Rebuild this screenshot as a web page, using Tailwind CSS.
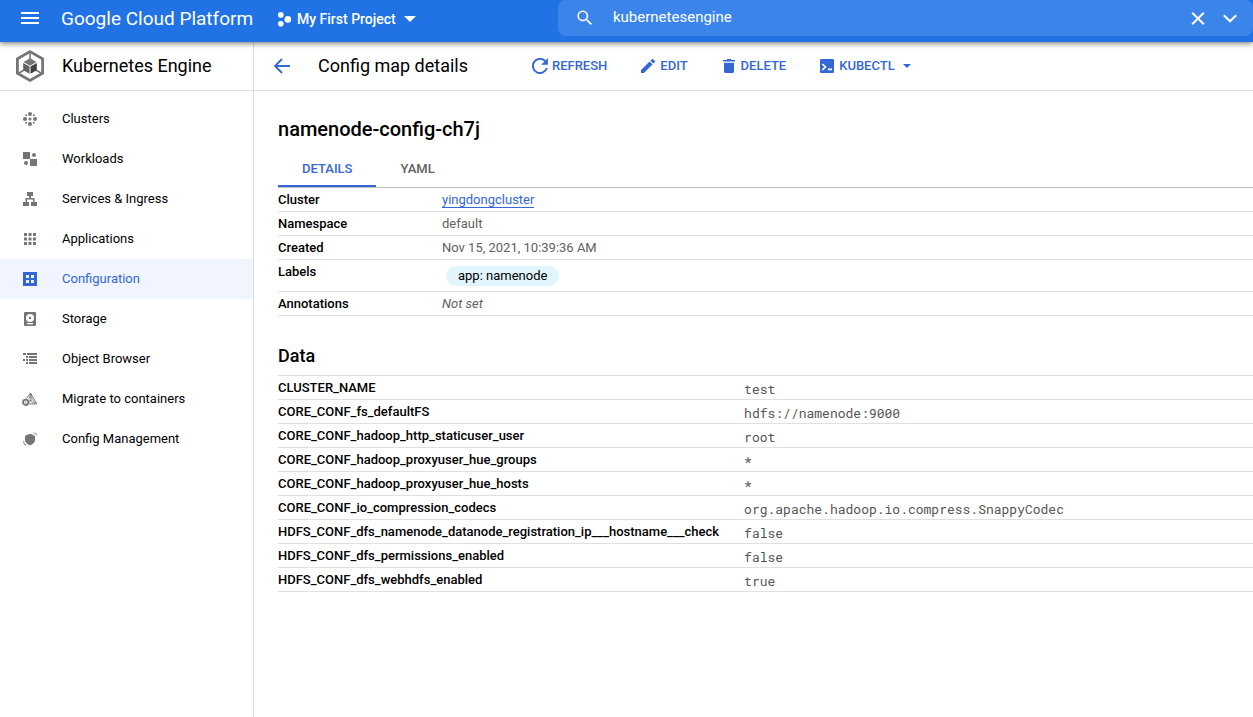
<!DOCTYPE html>
<html lang="en">
<head>
<meta charset="utf-8">
<meta name="viewport" content="width=device-width, initial-scale=1">
<title>Config map details – Kubernetes Engine</title>
<script src="https://cdn.jsdelivr.net/npm/@tailwindcss/browser@4"></script>
</head>
<body class="flex min-h-screen flex-col bg-white font-['Roboto',sans-serif] text-[13px] leading-5 text-black">

<header class="relative z-10 flex h-[42px] shrink-0 bg-[#2172e5] text-white shadow-[0_1px_6px_rgba(0,0,0,0.6)]">
  <div class="flex w-[558px] shrink-0 items-center pb-1">
    <button type="button" aria-label="Navigation menu" class="ml-[21px]">
      <svg class="size-[18px]" viewBox="0 0 18 18" fill="currentColor"><path d="M0 2h18v2H0zM0 7h18v2H0zM0 12h18v2H0z"/></svg>
    </button>
    <a href="#" class="ml-[22px] w-[194px] whitespace-nowrap text-[19px] leading-6">Google Cloud Platform</a>
    <button type="button" class="ml-[22px] flex items-center text-sm font-medium">
      <svg class="mr-[5px] size-[15px]" viewBox="0 0 15 15" fill="currentColor"><circle cx="3.8" cy="2.9" r="2.8"/><circle cx="3.8" cy="11.8" r="2.8"/><circle cx="10.8" cy="7.4" r="3.3"/></svg>
      My First Project
      <svg class="ml-2 h-[6px] w-3" viewBox="0 0 12 6" fill="currentColor"><path d="M0 0h12L6 6z"/></svg>
    </button>
  </div>
  <div class="flex h-9 min-w-0 flex-1 items-center rounded-lg bg-[#3b84ea] pr-4">
    <svg class="ml-[19px] size-4 shrink-0" viewBox="0 0 18 18" fill="currentColor"><path fill-rule="evenodd" d="M12.3 10.9h-.8l-.3-.3a6.1 6.1 0 1 0-.7.7l.3.3v.8l4.7 4.6 1.4-1.4zM6.5 10.9a4.3 4.3 0 1 1 0-8.7 4.3 4.3 0 0 1 0 8.7z"/></svg>
    <input type="text" aria-label="Search products and resources" value="kubernetesengine" class="ml-5 min-w-0 flex-1 bg-transparent pb-[2px] text-[15px] outline-none">
    <button type="button" aria-label="Clear search"><svg class="size-[14px]" viewBox="0 0 14 14" fill="none" stroke="currentColor" stroke-width="2"><path d="M1.2 1.7 12.8 13.3M12.8 1.7 1.2 13.3"/></svg></button>
    <button type="button" aria-label="Show search options" class="ml-[18px]"><svg class="size-[14px]" viewBox="0 0 14 14" fill="none" stroke="currentColor" stroke-width="2"><path d="m.8 4.3 6.2 6 6.2-6"/></svg></button>
  </div>
</header>

<div class="flex flex-1">
  <aside class="w-[254px] shrink-0 border-r border-[#dcdcdc]">
    <div class="flex h-[49px] items-center border-b border-[#e0e0e0] pl-4">
      <svg class="h-8 w-7" viewBox="0 0 28 32" fill="none">
        <path d="m14 1.6 12.6 7.2v14.4L14 30.4 1.4 23.2V8.8z" stroke="#757575" stroke-width="2.8"/>
        <path d="M14 3v7M3 23l6-3.5M25 23l-6-3.5" stroke="#757575" stroke-width="1.5"/>
        <path d="m14 8.3 6.5 3.700L14 15.700 7.500 12z" fill="#757575"/>
        <path d="m7.200 13 6.300 3.600v7.200l-6.300-3.600z" fill="#616161"/>
        <path d="m20.800 13-6.300 3.600v7.200l6.300-3.600z" fill="#424242"/>
      </svg>
      <h2 class="ml-[18px] text-lg leading-6">Kubernetes Engine</h2>
    </div>
    <nav aria-label="Kubernetes Engine" class="pt-2">
      <a href="#" class="flex h-10 items-center gap-[25px] pl-[23px]"><svg class="size-[14px] text-[#757575]" viewBox="0 0 14 14" fill="currentColor"><circle cx="7" cy="2" r="2"/><circle cx="7" cy="12" r="2"/><circle cx="2" cy="7" r="2"/><circle cx="12" cy="7" r="2"/><circle cx="7" cy="7" r="1.5"/><circle cx="3.200" cy="3.200" r="1"/><circle cx="10.800" cy="3.200" r="1"/><circle cx="3.200" cy="10.800" r="1"/><circle cx="10.800" cy="10.800" r="1"/></svg>Clusters</a>
      <a href="#" class="flex h-10 items-center gap-[25px] pl-[23px]"><svg class="size-[14px] text-[#757575]" viewBox="0 0 14 14" fill="currentColor"><path d="M0 0h7v7H0zM7 7h7v7H7z"/><circle cx="11" cy="3" r="2"/><circle cx="3" cy="11" r="2"/></svg>Workloads</a>
      <a href="#" class="flex h-10 items-center gap-[25px] pl-[23px]"><svg class="size-[14px] text-[#757575]" viewBox="0 0 14 14" fill="currentColor"><path d="M4 0h6v4H8v2h3.500v4H14v4H8v-4h2V7.500H4V10h2v4H0v-4h2.500V6H6V4H4z"/></svg>Services &amp; Ingress</a>
      <a href="#" class="flex h-10 items-center gap-[25px] pl-[23px]"><svg class="size-[14px] text-[#757575]" viewBox="0 0 14 14" fill="currentColor"><path d="M1 1h3v3H1zM5.500 1h3v3h-3zM10 1h3v3h-3zM1 5.500h3v3H1zM5.500 5.500h3v3h-3zM10 5.500h3v3h-3zM1 10h3v3H1zM5.500 10h3v3h-3zM10 10h3v3h-3z"/></svg>Applications</a>
      <a href="#" aria-current="page" class="flex h-10 items-center gap-[25px] bg-[#f0f5ff] pl-[23px] text-[#3367d6]"><svg class="size-[14px]" viewBox="0 0 14 14" fill="currentColor"><path fill-rule="evenodd" d="M0 0h14v14H0zM3 3v3h3V3zM8 3v3h3V3zM3 8v3h3V8zM8 8v3h3V8z"/></svg>Configuration</a>
      <a href="#" class="flex h-10 items-center gap-[25px] pl-[23px]"><svg class="size-[14px] text-[#757575]" viewBox="0 0 14 14"><rect x="1" width="12" height="14" rx="1" fill="currentColor"/><circle cx="7" cy="6" r="4" fill="#fff"/><circle cx="7" cy="6" r="1.200" fill="currentColor"/><path d="M4 11h6v1.300H4z" fill="#fff"/></svg>Storage</a>
      <a href="#" class="flex h-10 items-center gap-[25px] pl-[23px]"><svg class="size-[14px] text-[#757575]" viewBox="0 0 14 14" fill="currentColor"><path d="M0 1h3v2H0zM4 1h10v2H4zM3 4h2v2H3zM6 4h8v2H6zM0 7h2v2H0zM3 7h2v2H3zM6 7h8v2H6zM3 10h2v2H3zM6 10h8v2H6z"/></svg>Object Browser</a>
      <a href="#" class="flex h-10 items-center gap-[24px] pl-[22px]"><svg class="h-[14px] w-4" viewBox="0 0 16 14" fill="none" stroke="#757575"><path d="M4.500 6.500 8.500 1l6.300 10.900H7" stroke-width="1"/><path d="m8.500 2-1.300 5M8.700 2l1.600 6 3.700 3.500M7 9.300l3-1.300M8.700 2 8 9l5 2.500" stroke-width=".8"/><circle cx="3.700" cy="10.300" r="2.700" stroke-width="1.800"/><path d="M3.700 9v2.500" stroke-width=".8"/></svg>Migrate to containers</a>
      <a href="#" class="flex h-10 items-center gap-[25px] pl-[23px]"><svg class="size-[14px] text-[#757575]" viewBox="0 0 14 14" fill="none" stroke="currentColor"><path d="M7 2.300 11.500 4v4c0 2.300-1.900 4-4.500 4.900C4.400 12 2.500 10.300 2.500 8V4z" fill="currentColor"/><path d="M10.500.8c.8.300 1.400.9 1.500 1.700M12.200.5c.8.700 1.300 1.600 1.300 2.700M.6 9c0 1.800.9 3.300 2.600 4.200M.7 11.700c.5.800 1 1.300 1.700 1.600" stroke-width=".8"/></svg>Config Management</a>
    </nav>
  </aside>

  <main class="min-w-0 flex-1">
    <div class="flex h-[49px] items-center border-b border-[#e0e0e0] pl-5 text-[#3367d6]">
      <a href="#" aria-label="Back"><svg class="size-4" viewBox="0 0 16 16" fill="none" stroke="currentColor" stroke-width="1.800"><path d="M16 8H1.500M8 1 1 8l7 7"/></svg></a>
      <h1 class="ml-7 w-[214px] whitespace-nowrap text-lg leading-6 text-black">Config map details</h1>
      <div class="flex items-center font-medium">
        <button type="button" class="flex items-center gap-1"><svg class="size-4" viewBox="0 0 16 16" fill="none"><path d="M13.300 3.200A7.100 7.100 0 1 0 14.800 10" stroke="currentColor" stroke-width="1.900"/><path d="M15.900 0v6.700H9.200z" fill="currentColor"/></svg>REFRESH</button>
        <button type="button" class="ml-[34px] flex items-center gap-[5px]"><svg class="size-[14px]" viewBox="3 3 18 18" fill="currentColor"><path d="M3 17.250V21h3.750L17.810 9.940l-3.750-3.750zM20.710 7.040a1 1 0 0 0 0-1.410l-2.340-2.340a1 1 0 0 0-1.410 0l-1.830 1.830 3.750 3.750z"/></svg>EDIT</button>
        <button type="button" class="ml-[35px] flex items-center gap-[6px]"><svg class="h-[14px] w-3" viewBox="0 0 12 14" fill="currentColor"><path d="M0 1h3.500l.8-1h3.400l.8 1H12v1.500H0zM1 3.700h10V12.500c0 .8-.7 1.500-1.500 1.500h-7C1.700 14 1 13.300 1 12.500z"/></svg>DELETE</button>
        <button type="button" class="ml-[34px] flex items-center"><svg class="mr-[5px] size-[14px]" viewBox="0 0 14 14"><rect width="14" height="14" rx="1.200" fill="currentColor"/><path d="m2.300 5 3.200 3-3.200 3M8 10.300h4" fill="none" stroke="#fff" stroke-width="1.700"/></svg>KUBECTL<svg class="ml-2 h-1 w-2" viewBox="0 0 8 4" fill="currentColor"><path d="M0 0h8L4 4z"/></svg></button>
      </div>
    </div>

    <div class="pl-6">
      <h2 class="pt-[26px] text-xl leading-6 font-medium">namenode-config-ch7j</h2>
      <div role="tablist" class="mt-2 flex h-[39px] border-b border-[#bdbdbd] font-medium">
        <button type="button" role="tab" aria-selected="true" class="border-b-2 border-[#3367d6] px-6 pt-1 text-[#3367d6]">DETAILS</button>
        <button type="button" role="tab" aria-selected="false" class="border-b-2 border-transparent px-6 pt-1 text-[#616161]">YAML</button>
      </div>

      <table class="w-full border-separate border-spacing-0 text-left">
        <tbody class="text-[#616161] [&_td]:h-6 [&_td]:border-b [&_td]:border-[#e0e0e0] [&_td]:p-0 [&_th]:w-[164px] [&_th]:border-b [&_th]:border-[#e0e0e0] [&_th]:p-0 [&_th]:align-top [&_th]:leading-[23px] [&_th]:font-medium [&_th]:text-black">
          <tr><th scope="row">Cluster</th><td><a href="#" class="border-b border-[#3367d6] text-[#3367d6]">yingdongcluster</a></td></tr>
          <tr><th scope="row">Namespace</th><td>default</td></tr>
          <tr><th scope="row">Created</th><td>Nov 15, 2021, 10:39:36 AM</td></tr>
          <tr><th scope="row">Labels</th><td><div class="flex h-[31px] items-center pl-1"><span class="rounded-full bg-[#e1f5fe] px-3 text-black">app: namenode</span></div></td></tr>
          <tr><th scope="row">Annotations</th><td class="italic">Not set</td></tr>
        </tbody>
      </table>

      <h3 class="pt-7 pb-[7px] text-lg leading-6 font-medium">Data</h3>
      <table class="w-full border-separate border-spacing-0 border-t border-[#e0e0e0] text-left">
        <tbody class="[&_td]:h-6 [&_td]:border-b [&_td]:border-[#e0e0e0] [&_td]:p-0 [&_td]:pt-[2px] [&_td]:font-['Roboto_Mono','Liberation_Mono',monospace] [&_td]:text-[#555555] [&_th]:w-px [&_th]:border-b [&_th]:border-[#e0e0e0] [&_th]:p-0 [&_th]:pr-[25px] [&_th]:align-top [&_th]:leading-[23px] [&_th]:font-medium [&_th]:whitespace-nowrap">
          <tr><th scope="row">CLUSTER_NAME</th><td>test</td></tr>
          <tr><th scope="row">CORE_CONF_fs_defaultFS</th><td>hdfs://namenode:9000</td></tr>
          <tr><th scope="row">CORE_CONF_hadoop_http_staticuser_user</th><td>root</td></tr>
          <tr><th scope="row">CORE_CONF_hadoop_proxyuser_hue_groups</th><td>*</td></tr>
          <tr><th scope="row">CORE_CONF_hadoop_proxyuser_hue_hosts</th><td>*</td></tr>
          <tr><th scope="row">CORE_CONF_io_compression_codecs</th><td>org.apache.hadoop.io.compress.SnappyCodec</td></tr>
          <tr><th scope="row">HDFS_CONF_dfs_namenode_datanode_registration_ip___hostname___check</th><td>false</td></tr>
          <tr><th scope="row">HDFS_CONF_dfs_permissions_enabled</th><td>false</td></tr>
          <tr><th scope="row">HDFS_CONF_dfs_webhdfs_enabled</th><td>true</td></tr>
        </tbody>
      </table>
    </div>
  </main>
</div>
</body>
</html>
